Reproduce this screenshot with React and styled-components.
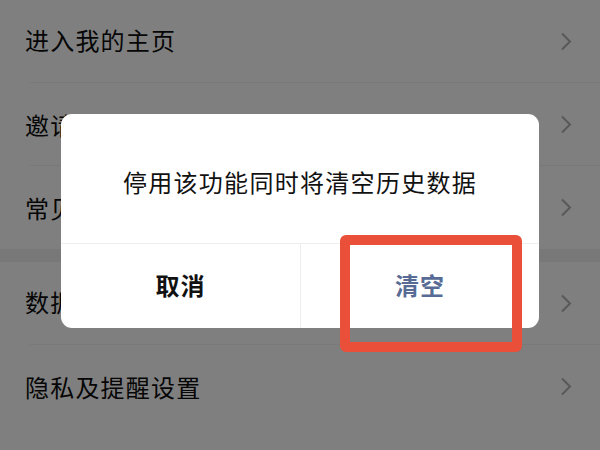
import styled, { createGlobalStyle } from "styled-components";

const GlobalStyle = createGlobalStyle`
    html, body {
        margin: 0;
        padding: 0;
        background: #ffffff;
        font-family: "Noto Sans CJK SC", "Noto Sans", sans-serif;
    }
`;

const Page = styled.div`
    width: 600px;
    height: 450px;
    overflow: hidden;
    background: #ffffff;
`;

const Section = styled.div`
    background: #ffffff;
`;

const SectionGap = styled.div`
    height: 13px;
    background: #f0f0f0;
`;

const Row = styled.div`
    display: flex;
    align-items: center;
    justify-content: space-between;
    height: 83px;
    padding: 0 28px 0 25px;
    box-sizing: border-box;
    position: relative;
    font-size: 24px;
    letter-spacing: 1.2px;
    color: #0c0c0c;

    &:first-child span {
        margin-top: -4px;
    }

    &:not(:last-child)::after {
        content: "";
        position: absolute;
        left: 30px;
        right: 0;
        bottom: 0;
        height: 1px;
        background: #f3f3f3;
    }
`;

const Chevron = () => (
    <svg width="12" height="19" viewBox="0 0 12 19" fill="none">
        <path d="M2 1.5 L10 9.5 L2 17.5" stroke="#b0b0b0" strokeWidth="2" />
    </svg>
);

const Overlay = styled.div`
    position: fixed;
    inset: 0;
    background: rgba(0, 0, 0, 0.5);
    display: flex;
    justify-content: center;
    align-items: flex-start;
    padding-top: 114px;
`;

const Dialog = styled.div`
    position: relative;
    width: 478px;
    background: #ffffff;
    border-radius: 11px;
    display: flex;
    flex-direction: column;
`;

const Message = styled.div`
    height: 130px;
    display: flex;
    align-items: center;
    justify-content: center;
    padding-top: 6px;
    box-sizing: border-box;
    font-size: 24px;
    letter-spacing: 1.3px;
    color: #111111;
    border-bottom: 1px solid #eeeeee;
`;

const Actions = styled.div`
    display: grid;
    grid-template-columns: 1fr 1fr;
    height: 84px;
`;

const ActionButton = styled.button`
    border: none;
    background: transparent;
    font-family: inherit;
    font-size: 24px;
    font-weight: 700;
    letter-spacing: 1px;
    color: ${(p) => (p.$primary ? "#576b95" : "#111111")};
    padding: 0 0 4px;
    & + & {
        border-left: 1px solid #eeeeee;
    }
`;

const Highlight = styled.div`
    position: absolute;
    left: 279px;
    top: 121px;
    width: 182px;
    height: 117px;
    box-sizing: border-box;
    border: 10px solid #ea4f3a;
    border-radius: 6px;
    pointer-events: none;
`;

const topItems = ["进入我的主页", "邀请好友", "常见问题"];
const bottomItems = ["数据管理", "隐私及提醒设置"];

const App = () => {
    return (
        <Page>
            <GlobalStyle />
            <Section>
                {topItems.map((label) => (
                    <Row key={label}>
                        <span>{label}</span>
                        <Chevron />
                    </Row>
                ))}
            </Section>
            <SectionGap />
            <Section>
                {bottomItems.map((label) => (
                    <Row key={label}>
                        <span>{label}</span>
                        <Chevron />
                    </Row>
                ))}
            </Section>
            <Overlay>
                <Dialog>
                    <Message>停用该功能同时将清空历史数据</Message>
                    <Actions>
                        <ActionButton>取消</ActionButton>
                        <ActionButton $primary>清空</ActionButton>
                    </Actions>
                    <Highlight />
                </Dialog>
            </Overlay>
        </Page>
    );
};

export default App;
